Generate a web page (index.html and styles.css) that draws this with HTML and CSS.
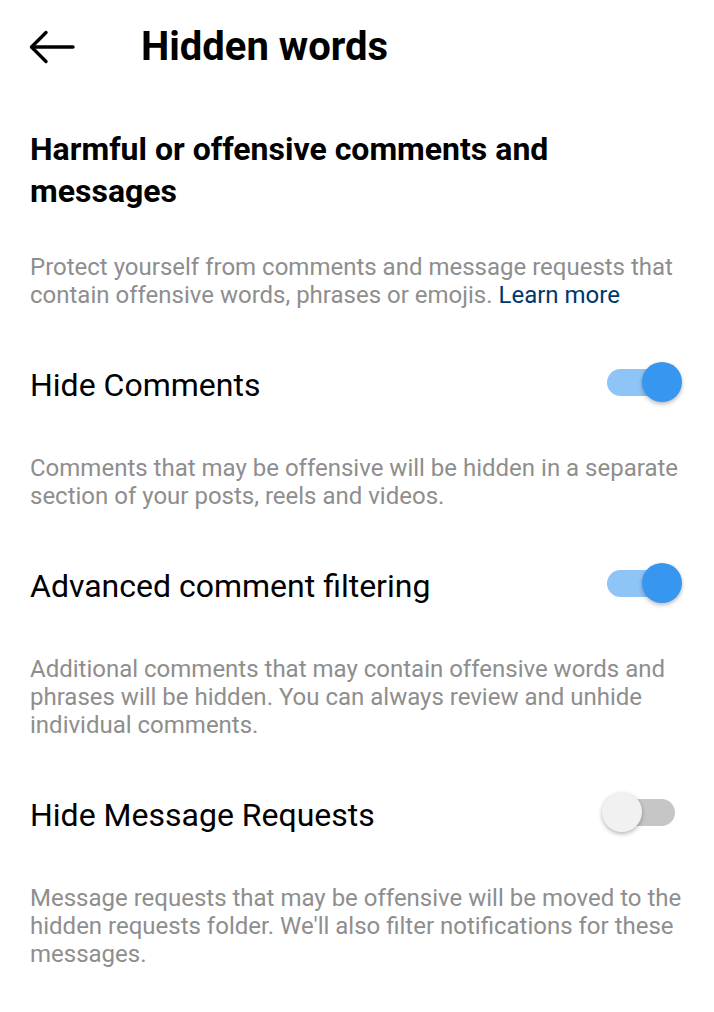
FILE: index.html
```html
<!DOCTYPE html>
<html lang="en">
<head>
<meta charset="utf-8">
<title>Hidden words</title>
<link rel="stylesheet" href="styles.css">
</head>
<body>
<header class="topbar">
  <button class="back" aria-label="Back">
    <svg width="46" height="34" viewBox="0 0 46 34" fill="none" stroke="#000" stroke-width="3.4" stroke-linecap="round" stroke-linejoin="round">
      <path d="M44 17H3"/>
      <path d="M17 2.5L2.5 17L17 31.5"/>
    </svg>
  </button>
  <h1 class="title">Hidden words</h1>
</header>

<main class="content">
  <h2 class="section-title">Harmful or offensive comments and messages</h2>
  <p class="note intro">Protect yourself from comments and message requests that contain offensive words, phrases or emojis. <a class="link" href="#">Learn more</a></p>

  <div class="setting">
    <span class="label">Hide Comments</span>
    <span class="switch on"><span class="knob"></span></span>
  </div>
  <p class="note">Comments that may be offensive will be hidden in a separate section of your posts, reels and videos.</p>

  <div class="setting">
    <span class="label">Advanced comment filtering</span>
    <span class="switch on"><span class="knob"></span></span>
  </div>
  <p class="note">Additional comments that may contain offensive words and phrases will be hidden. You can always review and unhide individual comments.</p>

  <div class="setting">
    <span class="label">Hide Message Requests</span>
    <span class="switch"><span class="knob"></span></span>
  </div>
  <p class="note">Message requests that may be offensive will be moved to the hidden requests folder. We'll also filter notifications for these messages.</p>
</main>
</body>
</html>
```

FILE: styles.css
```css
* {
  box-sizing: border-box;
}

html, body {
  margin: 0;
  padding: 0;
  background: #ffffff;
}

body {
  font-family: Roboto, "Noto Sans", "Liberation Sans", sans-serif;
  color: #000000;
  width: 714px;
}

/* Top app bar */
.topbar {
  display: flex;
  align-items: center;
  height: 94px;
  padding-left: 29px;
}

.back {
  display: flex;
  align-items: center;
  background: none;
  border: 0;
  padding: 0;
  margin: 0 66px 0 0;
  cursor: pointer;
}

.title {
  margin: 0;
  font-size: 40px;
  font-weight: 700;
  line-height: 48px;
}

/* Page body */
.content {
  padding: 34px 30px 40px 30px;
}

.section-title {
  margin: 0;
  max-width: 580px;
  font-size: 32px;
  font-weight: 700;
  line-height: 42px;
}

.note {
  margin: 0;
  font-size: 24px;
  line-height: 28px;
  color: #8e8e8e;
}

.intro {
  margin-top: 41px;
}

.link {
  color: #00376b;
  text-decoration: none;
}

.setting {
  display: flex;
  align-items: center;
  justify-content: space-between;
  height: 56px;
  margin-top: 48px;
  margin-bottom: 41px;
}

.label {
  font-size: 32px;
  line-height: 40px;
}

/* Toggle switch */
.switch {
  position: relative;
  display: block;
  flex: none;
  width: 68px;
  height: 27px;
  margin-right: 9px;
  margin-bottom: 5px;
  border-radius: 14px;
  background: #c6c6c6;
}

.switch.on {
  background: #8fc4f6;
}

.knob {
  position: absolute;
  top: -7px;
  left: -5px;
  width: 40px;
  height: 40px;
  border-radius: 50%;
  background: #f1f1f1;
  box-shadow: 0 2px 4px rgba(0, 0, 0, 0.28);
}

.switch.on .knob {
  left: 35px;
  background: #3796f0;
}
```
